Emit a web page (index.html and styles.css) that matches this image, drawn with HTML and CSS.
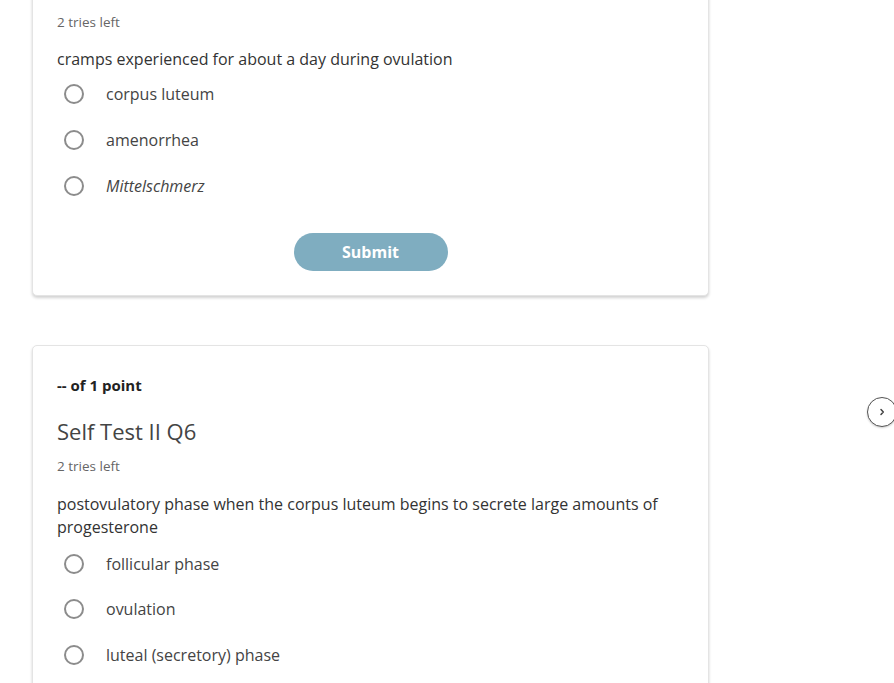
FILE: index.html
```html
<!DOCTYPE html>
<html lang="en">
<head>
    <meta charset="UTF-8">
    <meta name="viewport" content="width=device-width, initial-scale=1.0">
    <title>Self Test II</title>
    <link rel="stylesheet" href="styles.css">
</head>
<body>
    <div class="quiz-list">
        <!-- Q5 (scrolled, top cut off) -->
        <div class="question-card first">
            <p class="tries">2 tries left</p>
            <p class="prompt">cramps experienced for about a day during ovulation</p>
            <ul class="options">
                <li><span class="radio"></span><span>corpus luteum</span></li>
                <li><span class="radio"></span><span>amenorrhea</span></li>
                <li><span class="radio"></span><em>Mittelschmerz</em></li>
            </ul>
            <div class="actions">
                <button class="submit-btn">Submit</button>
            </div>
        </div>

        <!-- Q6 -->
        <div class="question-card">
            <p class="points">-- of 1 point</p>
            <h2 class="title">Self Test II Q6</h2>
            <p class="tries">2 tries left</p>
            <p class="prompt">postovulatory phase when the corpus luteum begins to secrete large amounts of progesterone</p>
            <ul class="options">
                <li><span class="radio"></span><span>follicular phase</span></li>
                <li><span class="radio"></span><span>ovulation</span></li>
                <li><span class="radio"></span><span>luteal (secretory) phase</span></li>
            </ul>
        </div>
    </div>

    <button class="next-btn" aria-label="Next">
        <svg width="10" height="10" viewBox="0 0 10 10"><path d="M4 2.5 L6.3 5 L4 7.5" fill="none" stroke="#444" stroke-width="1.5" stroke-linecap="round" stroke-linejoin="round"/></svg>
    </button>
</body>
</html>
```

FILE: styles.css
```css
body {
    font-family: "Open Sans", "Liberation Sans", sans-serif;
    background-color: #fff;
    color: #333;
    margin: 0;
    padding: 0;
    overflow: hidden;
}

.quiz-list {
    width: 677px;
    margin-left: 32px;
    display: flex;
    flex-direction: column;
    gap: 49px;
}

.question-card {
    background-color: #fff;
    border: 1px solid #e4e4e4;
    border-radius: 5px;
    box-shadow: 0 2px 3px rgba(0, 0, 0, 0.18);
    padding: 30px 24px 24px;
}

.question-card.first {
    margin-top: -12px;
    padding-top: 24px;
}

.question-card p,
.question-card h2 {
    margin: 0;
}

.points {
    font-size: 15px;
    font-weight: 700;
    line-height: 18px;
    color: #222;
}

.title {
    margin-top: 23px !important;
    font-size: 22px;
    font-weight: 400;
    line-height: 28px;
    color: #444;
}

.tries {
    font-size: 13.5px;
    line-height: 18px;
    color: #666;
}

.title + .tries {
    margin-top: 12px !important;
}

.prompt {
    margin-top: 17px !important;
    font-size: 16px;
    line-height: 22px;
    color: #333;
}

.title ~ .prompt {
    margin-top: 18px !important;
    line-height: 23px;
}

.options {
    list-style: none;
    margin: 1px 0 0;
    padding: 0;
}

.title ~ .options {
    margin-top: 2px;
}

.options li {
    display: flex;
    align-items: center;
    height: 46px;
    font-size: 16px;
    color: #444;
}

.title ~ .options li {
    height: 45.5px;
}

.radio {
    box-sizing: border-box;
    width: 20px;
    height: 20px;
    border: 2px solid #8c8c8c;
    border-radius: 50%;
    margin-left: 7px;
    margin-right: 22px;
    flex-shrink: 0;
}

.actions {
    display: flex;
    justify-content: center;
    margin-top: 24px;
}

.submit-btn {
    width: 154px;
    height: 38px;
    border: none;
    border-radius: 19px;
    background-color: #7fadc0;
    color: #fff;
    font-family: "Open Sans", "Liberation Sans", sans-serif;
    font-size: 16px;
    font-weight: 700;
    cursor: pointer;
}

.next-btn {
    position: absolute;
    left: 867px;
    top: 397px;
    width: 30px;
    height: 30px;
    box-sizing: border-box;
    border: 1.5px solid #555;
    border-radius: 50%;
    background-color: #fff;
    box-shadow: 0 1px 2px rgba(0, 0, 0, 0.2);
    padding: 0;
    display: flex;
    align-items: center;
    justify-content: center;
}
```
